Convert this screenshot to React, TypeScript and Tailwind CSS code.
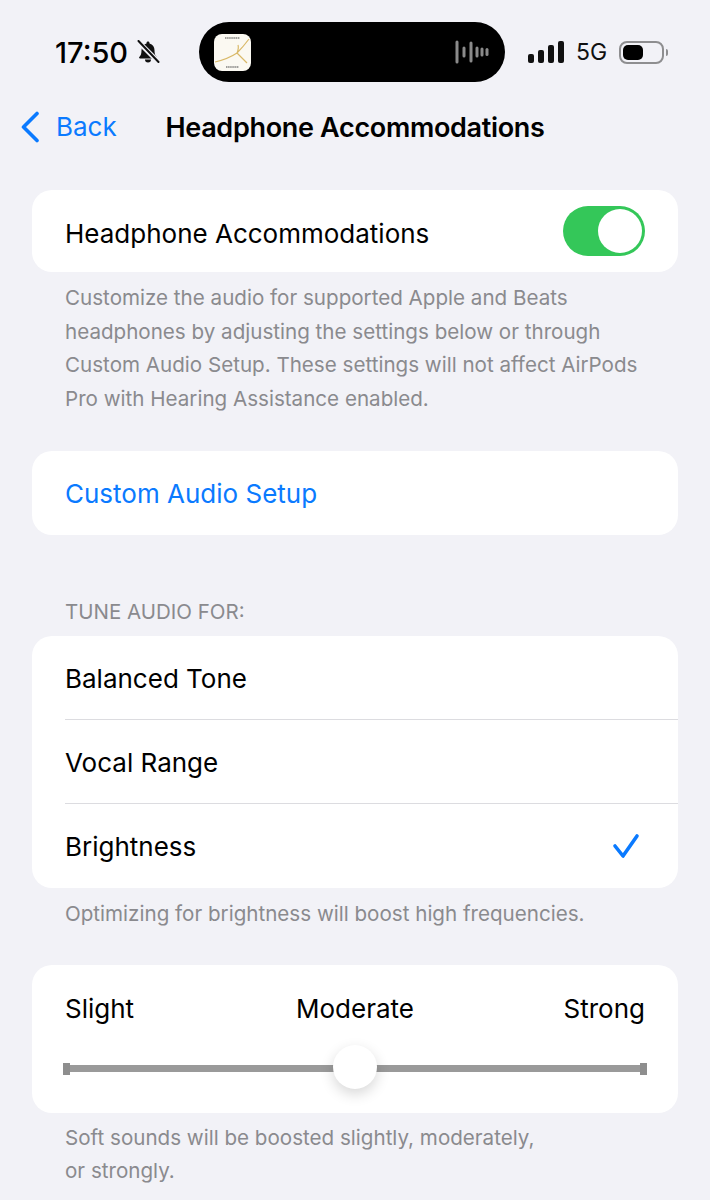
const font = { fontFamily: "Inter, 'Liberation Sans', sans-serif" }

function BellSlash() {
  return (
    <svg viewBox="0 0 24 24" className="ml-[8px] h-[24px] w-[24px]">
      <path d="M12 1.5c-.9 0-1.5.7-1.5 1.5v.4C7.2 4.2 5.5 7 5.5 10.2c0 3.6-.7 5.2-2.2 6.8-.5.6-.1 1.5.7 1.5h16c.8 0 1.2-.9.7-1.5-1.5-1.6-2.2-3.2-2.2-6.8 0-3.2-1.7-6-5-6.8V3c0-.8-.6-1.5-1.5-1.5z" fill="#111" />
      <path d="M9 19.6a3 3 0 0 0 6 0z" fill="#111" />
      <path d="M2 1.5 22 21.5" stroke="#f2f2f7" strokeWidth="5" />
      <path d="M2.5 1 22.5 22" stroke="#111" strokeWidth="2" strokeLinecap="round" />
    </svg>
  )
}

function StatusBar() {
  return (
    <div className="flex h-[60px] items-center pl-[55px] mt-[22px]">
      <div className="flex w-[144px] items-center">
        <span className="text-[29px] font-medium leading-none text-black">17:50</span>
        <BellSlash />
      </div>
      <div className="flex h-[60px] w-[306px] items-center justify-between rounded-[30px] bg-black pl-[15px] pr-[14px]">
        <div className="h-[37px] w-[37px] overflow-hidden rounded-[8px] bg-[#fbf9f2]">
          <svg viewBox="0 0 37 37" className="h-full w-full">
            <path d="M11 4h15M12 33h13" stroke="#444" strokeWidth="1.2" strokeDasharray="1.5 0.6" />
            <path d="M1 28 Q14 25 23 19 Q29 13 35 5 M23 19 L33 29 M23 19 Q25 14 24 11" stroke="#d9b968" strokeWidth="1.2" fill="none" />
          </svg>
        </div>
        <svg viewBox="0 0 36 24" className="h-[24px] w-[36px]">
          <g stroke="#8a8a8a" strokeLinecap="round" strokeWidth="3">
            <path d="M2 2v20" />
            <path d="M9 8v8" />
            <path d="M16 3v18" />
            <path d="M22 8v8" />
            <path d="M27 9v6" />
            <path d="M32 9.5v5" />
          </g>
        </svg>
      </div>
      <div className="ml-[23px] flex items-center">
        <svg viewBox="0 0 36 22" className="h-[22px] w-[36px]">
          <g fill="#111">
            <rect x="0" y="13" width="6" height="9" rx="2" />
            <rect x="10" y="9" width="6" height="13" rx="2" />
            <rect x="20" y="4" width="6" height="18" rx="2" />
            <rect x="30" y="0" width="6" height="22" rx="2" />
          </g>
        </svg>
        <span className="ml-[12px] text-[23px] leading-none text-[#111]">5G</span>
        <div className="ml-[12px] flex h-[23px] w-[45px] items-center rounded-[8px] border-2 border-[#8e8e90] p-[2px]">
          <div className="h-[15px] w-[20px] rounded-[5px] bg-black" />
        </div>
        <div className="ml-[2px] h-[7px] w-[2px] rounded-r-full bg-[#8e8e90]" />
      </div>
    </div>
  )
}

function NavBar() {
  return (
    <div className="mt-[22px] grid h-[46px] grid-cols-[1fr_auto_1fr] items-center">
      <div className="flex items-center pl-[20px]">
        <svg viewBox="0 0 20 32" className="h-[32px] w-[20px]">
          <path d="M17 2.5 L3.5 16 L17 29.5" fill="none" stroke="#0a7aff" strokeWidth="3.6" strokeLinecap="round" strokeLinejoin="round" />
        </svg>
        <span className="ml-[16px] text-[26px] leading-none text-[#0a7aff]">Back</span>
      </div>
      <h1 className="text-[27px] font-semibold leading-none tracking-[-0.32px] text-black">Headphone Accommodations</h1>
      <div />
    </div>
  )
}

function Footer({ children, className = "" }: { children: React.ReactNode; className?: string }) {
  return <p className={`pl-[65px] text-[20.6px] leading-[33.7px] text-[#8a8a8e] ${className}`}>{children}</p>
}

function Row({ label, checked, border }: { label: string; checked?: boolean; border?: boolean }) {
  return (
    <div className="relative flex h-[84px] items-center justify-between pl-[33px] pr-[38px]">
      <span className="pt-[2px] text-[26px] leading-none text-black">{label}</span>
      {checked && (
        <svg viewBox="0 0 28 28" className="h-[28px] w-[28px]">
          <path d="M3 14 L11 24 L25 4" fill="none" stroke="#0a7aff" strokeWidth="3.6" strokeLinecap="round" strokeLinejoin="round" />
        </svg>
      )}
      {border && <div className="absolute bottom-0 left-[33px] right-0 h-px bg-[#dcdce0]" />}
    </div>
  )
}

function Slider() {
  return (
    <div className="relative mt-[24px] flex h-[46px] items-center px-[31px]">
      <div className="h-[12px] w-[7px] bg-[#8e8e8e]" />
      <div className="h-[7px] flex-1 bg-[#9a9a9a]" />
      <div className="h-[12px] w-[7px] bg-[#8e8e8e]" />
      <div className="absolute left-[301px] top-[-1px] h-[44px] w-[44px] rounded-full bg-white shadow-[0_5px_14px_rgba(0,0,0,0.16)]" />
    </div>
  )
}

export default function App() {
  return (
    <div className="h-[1200px] w-[710px] overflow-hidden bg-[#f2f2f7]" style={font}>
      <StatusBar />
      <NavBar />

      <section className="mx-[32px] mt-[40px] flex h-[82px] items-center justify-between rounded-[20px] bg-white pl-[33px] pr-[33px]">
        <span className="pt-[5px] text-[26px] leading-none text-black">Headphone Accommodations</span>
        <div className="flex h-[50px] w-[82px] items-center justify-end rounded-full bg-[#34c759] pr-[3px]">
          <div className="h-[44px] w-[44px] rounded-full bg-white" />
        </div>
      </section>
      <Footer className="mt-[9px] pr-[65px]">
        Customize the audio for supported Apple and Beats headphones by adjusting the settings below or through Custom Audio Setup. These settings will not affect AirPods Pro with Hearing Assistance enabled.
      </Footer>

      <section className="mx-[32px] mt-[35px] flex h-[84px] items-center rounded-[20px] bg-white pl-[33px]">
        <span className="pt-[2px] text-[26px] leading-none text-[#0a7aff]">Custom Audio Setup</span>
      </section>

      <p className="mt-[64px] pl-[65px] text-[20.5px] leading-[26px] text-[#8a8a8e]">TUNE AUDIO FOR:</p>
      <section className="mx-[32px] mt-[11px] overflow-hidden rounded-[20px] bg-white">
        <Row label="Balanced Tone" border />
        <Row label="Vocal Range" border />
        <Row label="Brightness" checked />
      </section>
      <Footer className="mt-[9px]">Optimizing for brightness will boost high frequencies.</Footer>

      <section className="mx-[32px] mt-[34px] h-[148px] rounded-[20px] bg-white pt-[31px]">
        <div className="grid grid-cols-[1fr_auto_1fr] px-[33px] text-[26px] leading-none text-black">
          <span>Slight</span>
          <span>Moderate</span>
          <span className="text-right">Strong</span>
        </div>
        <Slider />
      </section>
      <Footer className="mt-[8px] pr-[170px]">Soft sounds will be boosted slightly, moderately, or strongly.</Footer>
    </div>
  )
}
